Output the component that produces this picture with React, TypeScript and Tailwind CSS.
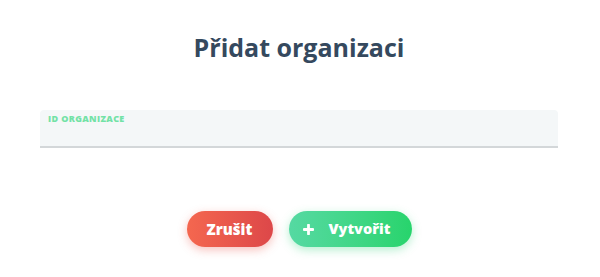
export default function App() {
  return (
    <div
      className="flex h-[277px] w-full flex-col bg-white pl-[40px] pr-[42px]"
      style={{ fontFamily: "'Open Sans', 'Noto Sans', sans-serif" }}
    >
      <h1 className="mt-[33px] text-center text-[25px] font-bold leading-[28px] text-[#35495e]">
        Přidat organizaci
      </h1>

      <label className="mt-[49px] flex h-[38px] flex-col rounded-t-[4px] border-b-2 border-[#d3d7d9] bg-[#f4f7f8] px-[8px] pt-[3px]">
        <span className="text-[9px] font-extrabold leading-[12px] tracking-[0.04em] text-[#72e2a6]">
          ID ORGANIZACE
        </span>
        <input className="bg-transparent text-[13px] text-[#35495e] outline-none" />
      </label>

      <div className="mt-[63px] flex items-center justify-center gap-[16px]">
        <button
          type="button"
          className="flex h-[36px] w-[86px] items-center justify-center rounded-full bg-gradient-to-r from-[#f4674f] to-[#dd4749] text-[15px] font-extrabold text-white shadow-[0_3px_10px_rgba(232,80,70,0.35)]"
        >
          Zrušit
        </button>
        <button
          type="button"
          className="flex h-[36px] w-[123px] items-center gap-[15px] rounded-full bg-gradient-to-r from-[#55d9a2] to-[#27d46c] pl-[14px] text-[14.5px] font-extrabold text-white shadow-[0_3px_10px_rgba(50,210,120,0.35)]"
        >
          <svg width="11" height="11" viewBox="0 0 11 11" aria-hidden>
            <path d="M5.5 1v9M1 5.5h9" stroke="white" strokeWidth="2.8" strokeLinecap="round" />
          </svg>
          Vytvořit
        </button>
      </div>
    </div>
  );
}
